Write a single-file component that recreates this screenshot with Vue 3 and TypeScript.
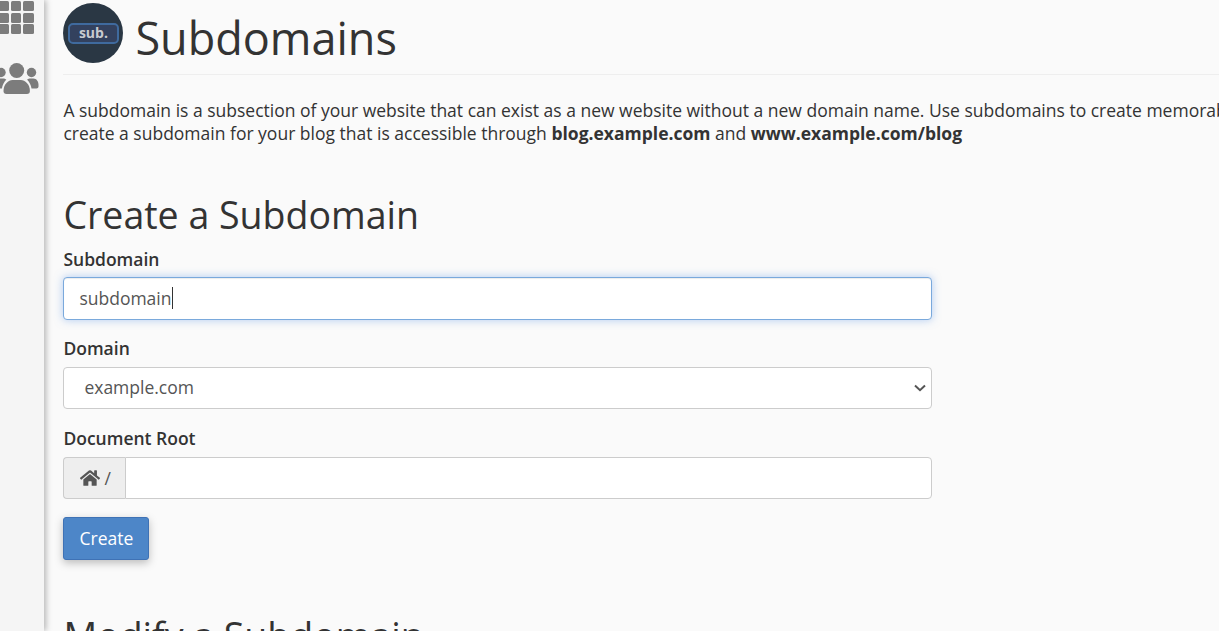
<template>
  <div class="page">
    <aside class="sidebar">
      <div class="grid-icon">
        <span v-for="n in 9" :key="n"></span>
      </div>
      <svg class="users-icon" viewBox="0 0 40 32" width="40" height="32">
        <circle cx="16.700" cy="7.500" r="7.500" />
        <circle cx="1" cy="9.500" r="4.700" />
        <circle cx="31.500" cy="9.500" r="4.700" />
        <path d="M3.500 28c0-7 5-11 9-11h8.400c4 0 9 4 9 11 0 2-1 3-3 3H6.500c-2 0-3-1-3-3z" />
        <path d="M27 16.500c1-.5 2-1 3.500-1h3c3 0 5 3 5 6v2c0 1-1 2-2 2h-5c-.5-3.500-2-6.500-4.500-9z" />
        <path d="M6.400 16.500c-1-.5-2-1-3.500-1h-3c-3 0-5 3-5 6v2c0 1 1 2 2 2h5c.5-3.500 2-6.500 4.500-9z" />
      </svg>
    </aside>
    <main class="content">
      <header class="title">
        <div class="logo"><span class="logo-tag">sub.</span></div>
        <h1>Subdomains</h1>
      </header>
      <p class="intro">
        A subdomain is a subsection of your website that can exist as a new website without a new domain name. Use subdomains to create memorable URLs for different content areas of your site. For example, you can<br />
        create a subdomain for your blog that is accessible through <b>blog.example.com</b> and <b>www.example.com/blog</b>
      </p>
      <h2>Create a Subdomain</h2>
      <form class="form" @submit.prevent>
        <label for="sub" class="first">Subdomain</label>
        <div class="over-wrap">
          <input id="sub" class="field focused" type="text" v-model="subdomain" />
          <i class="caret"></i>
        </div>
        <label for="domain" class="second">Domain</label>
        <div class="over-wrap">
          <select id="domain" class="field select" v-model="domain">
            <option>example.com</option>
          </select>
          <svg class="chevron" viewBox="0 0 12 8" width="12" height="8">
            <path d="M1 1.500 6 6.200 11 1.500" />
          </svg>
        </div>
        <label for="root">Document Root</label>
        <div class="group">
          <span class="addon">
            <svg viewBox="0 0 576 512" width="20" height="18">
              <path d="M280.400 148.300 96 300.100V464a16 16 0 0 0 16 16l112-.3a16 16 0 0 0 15.900-16V368a16 16 0 0 1 16-16h64a16 16 0 0 1 16 16v95.600a16 16 0 0 0 16 16.100l112 .3a16 16 0 0 0 16-16V300L295.700 148.300a12.200 12.200 0 0 0-15.300 0zM571.600 251.500 488 182.600V44.100a12 12 0 0 0-12-12h-56a12 12 0 0 0-12 12v72.600L318.500 43a48 48 0 0 0-61 0L4.300 251.500a12 12 0 0 0-1.600 16.900l25.500 31A12 12 0 0 0 45.200 301l235.200-193.700a12.200 12.200 0 0 1 15.300 0L530.900 301a12 12 0 0 0 16.900-1.600l25.500-31a12 12 0 0 0-1.700-16.900z" />
            </svg>
            /
          </span>
          <input id="root" class="field root" type="text" />
        </div>
        <button class="create" type="submit">Create</button>
      </form>
      <h2 class="modify">Modify a Subdomain</h2>
    </main>
  </div>
</template>

<script setup lang="ts">
import { ref } from "vue";

const subdomain = ref("subdomain");
const domain = ref("example.com");
</script>

<style>
html,
body {
  margin: 0;
  height: 100%;
  overflow: hidden;
}
</style>

<style scoped>
.page {
  display: flex;
  height: 631px;
  overflow: hidden;
  background: #fafafa;
  color: #333333;
  font-family: "Open Sans", sans-serif;
  font-size: 17.500px;
}

.sidebar {
  flex: 0 0 44px;
  box-sizing: border-box;
  background: #f5f5f5;
  box-shadow: 2px 0 6px rgba(0, 0, 0, 0.28);
  overflow: hidden;
}

.grid-icon {
  display: grid;
  grid-template-columns: repeat(3, 10.500px);
  grid-auto-rows: 10px;
  column-gap: 2.200px;
  row-gap: 1.500px;
  margin: 1px 0 0 -2px;
  width: 36px;
}

.grid-icon span {
  background: #7c7c7c;
  border-radius: 1.500px;
}

.users-icon {
  display: block;
  margin-top: 29px;
  fill: #7c7c7c;
}

.content {
  flex: 1;
  min-width: 0;
  padding: 3px 0 0 19.400px;
}

.title {
  display: flex;
  align-items: flex-start;
  gap: 12px;
  padding-bottom: 11px;
  border-bottom: 1px solid #eeeeee;
}

.logo {
  flex: 0 0 60px;
  height: 60px;
  border-radius: 50%;
  background: #2a3744;
  display: flex;
  align-items: center;
  justify-content: center;
}

.logo-tag {
  width: 51px;
  height: 21px;
  box-sizing: border-box;
  border: 2.500px solid #3f6a9e;
  border-radius: 5px;
  background: #33415e;
  color: #c8cbd0;
  font-size: 14px;
  font-weight: 700;
  line-height: 16px;
  text-align: center;
}

h1 {
  margin: 5px 0 0;
  font-size: 45px;
  font-weight: 400;
  line-height: 60px;
  height: 55px;
}

.intro {
  margin: 24px 0 0;
  line-height: 23px;
  white-space: nowrap;
}

.intro b {
  font-weight: 700;
}

h2 {
  margin: 45px 0 0;
  font-size: 37.500px;
  font-weight: 400;
  line-height: 50px;
  white-space: nowrap;
}

.form {
  width: 869px;
  display: flex;
  flex-direction: column;
}

label {
  font-weight: 600;
  line-height: 22px;
  margin: 18px 0 8px;
}

label.first {
  margin: 8px 0 7px;
}

label.second {
  margin-top: 17px;
}

.over-wrap {
  position: relative;
}

.field {
  display: block;
  width: 100%;
  height: 42px;
  box-sizing: border-box;
  border: 1px solid #cccccc;
  border-radius: 4px;
  background: #ffffff;
  padding: 0 15px 2px;
  color: #555555;
  font: inherit;
  outline: none;
}

.focused {
  height: 43px;
  border-color: #7aa9dc;
  box-shadow: inset 0 1px 1px rgba(0, 0, 0, 0.075), 0 0 8px rgba(102, 155, 233, 0.5);
}

.caret {
  position: absolute;
  left: 109px;
  top: 10px;
  width: 1px;
  height: 22px;
  background: #333333;
}

.select {
  appearance: none;
  padding-left: 20px;
}

.chevron {
  position: absolute;
  right: 6px;
  top: 17px;
  fill: none;
  stroke: #555555;
  stroke-width: 2;
  pointer-events: none;
}

.group {
  display: flex;
}

.addon {
  flex: 0 0 auto;
  box-sizing: border-box;
  width: 62px;
  height: 42px;
  display: flex;
  align-items: center;
  gap: 4px;
  padding-left: 16px;
  border: 1px solid #cccccc;
  border-right: 0;
  border-radius: 4px 0 0 4px;
  background: #eeeeee;
  color: #555555;
}

.addon svg {
  fill: #555555;
}

.root {
  flex: 1;
  width: auto;
  min-width: 0;
  border-radius: 0 4px 4px 0;
}

.create {
  align-self: flex-start;
  margin-top: 18px;
  width: 86px;
  height: 43px;
  padding: 0 0 1px;
  border: 1px solid #3f72b5;
  border-radius: 3px;
  background: #4d86c8;
  color: #ffffff;
  font: inherit;
  box-shadow: 0 3px 8px rgba(0, 0, 0, 0.25);
}

.modify {
  margin-top: 51px;
}
</style>
